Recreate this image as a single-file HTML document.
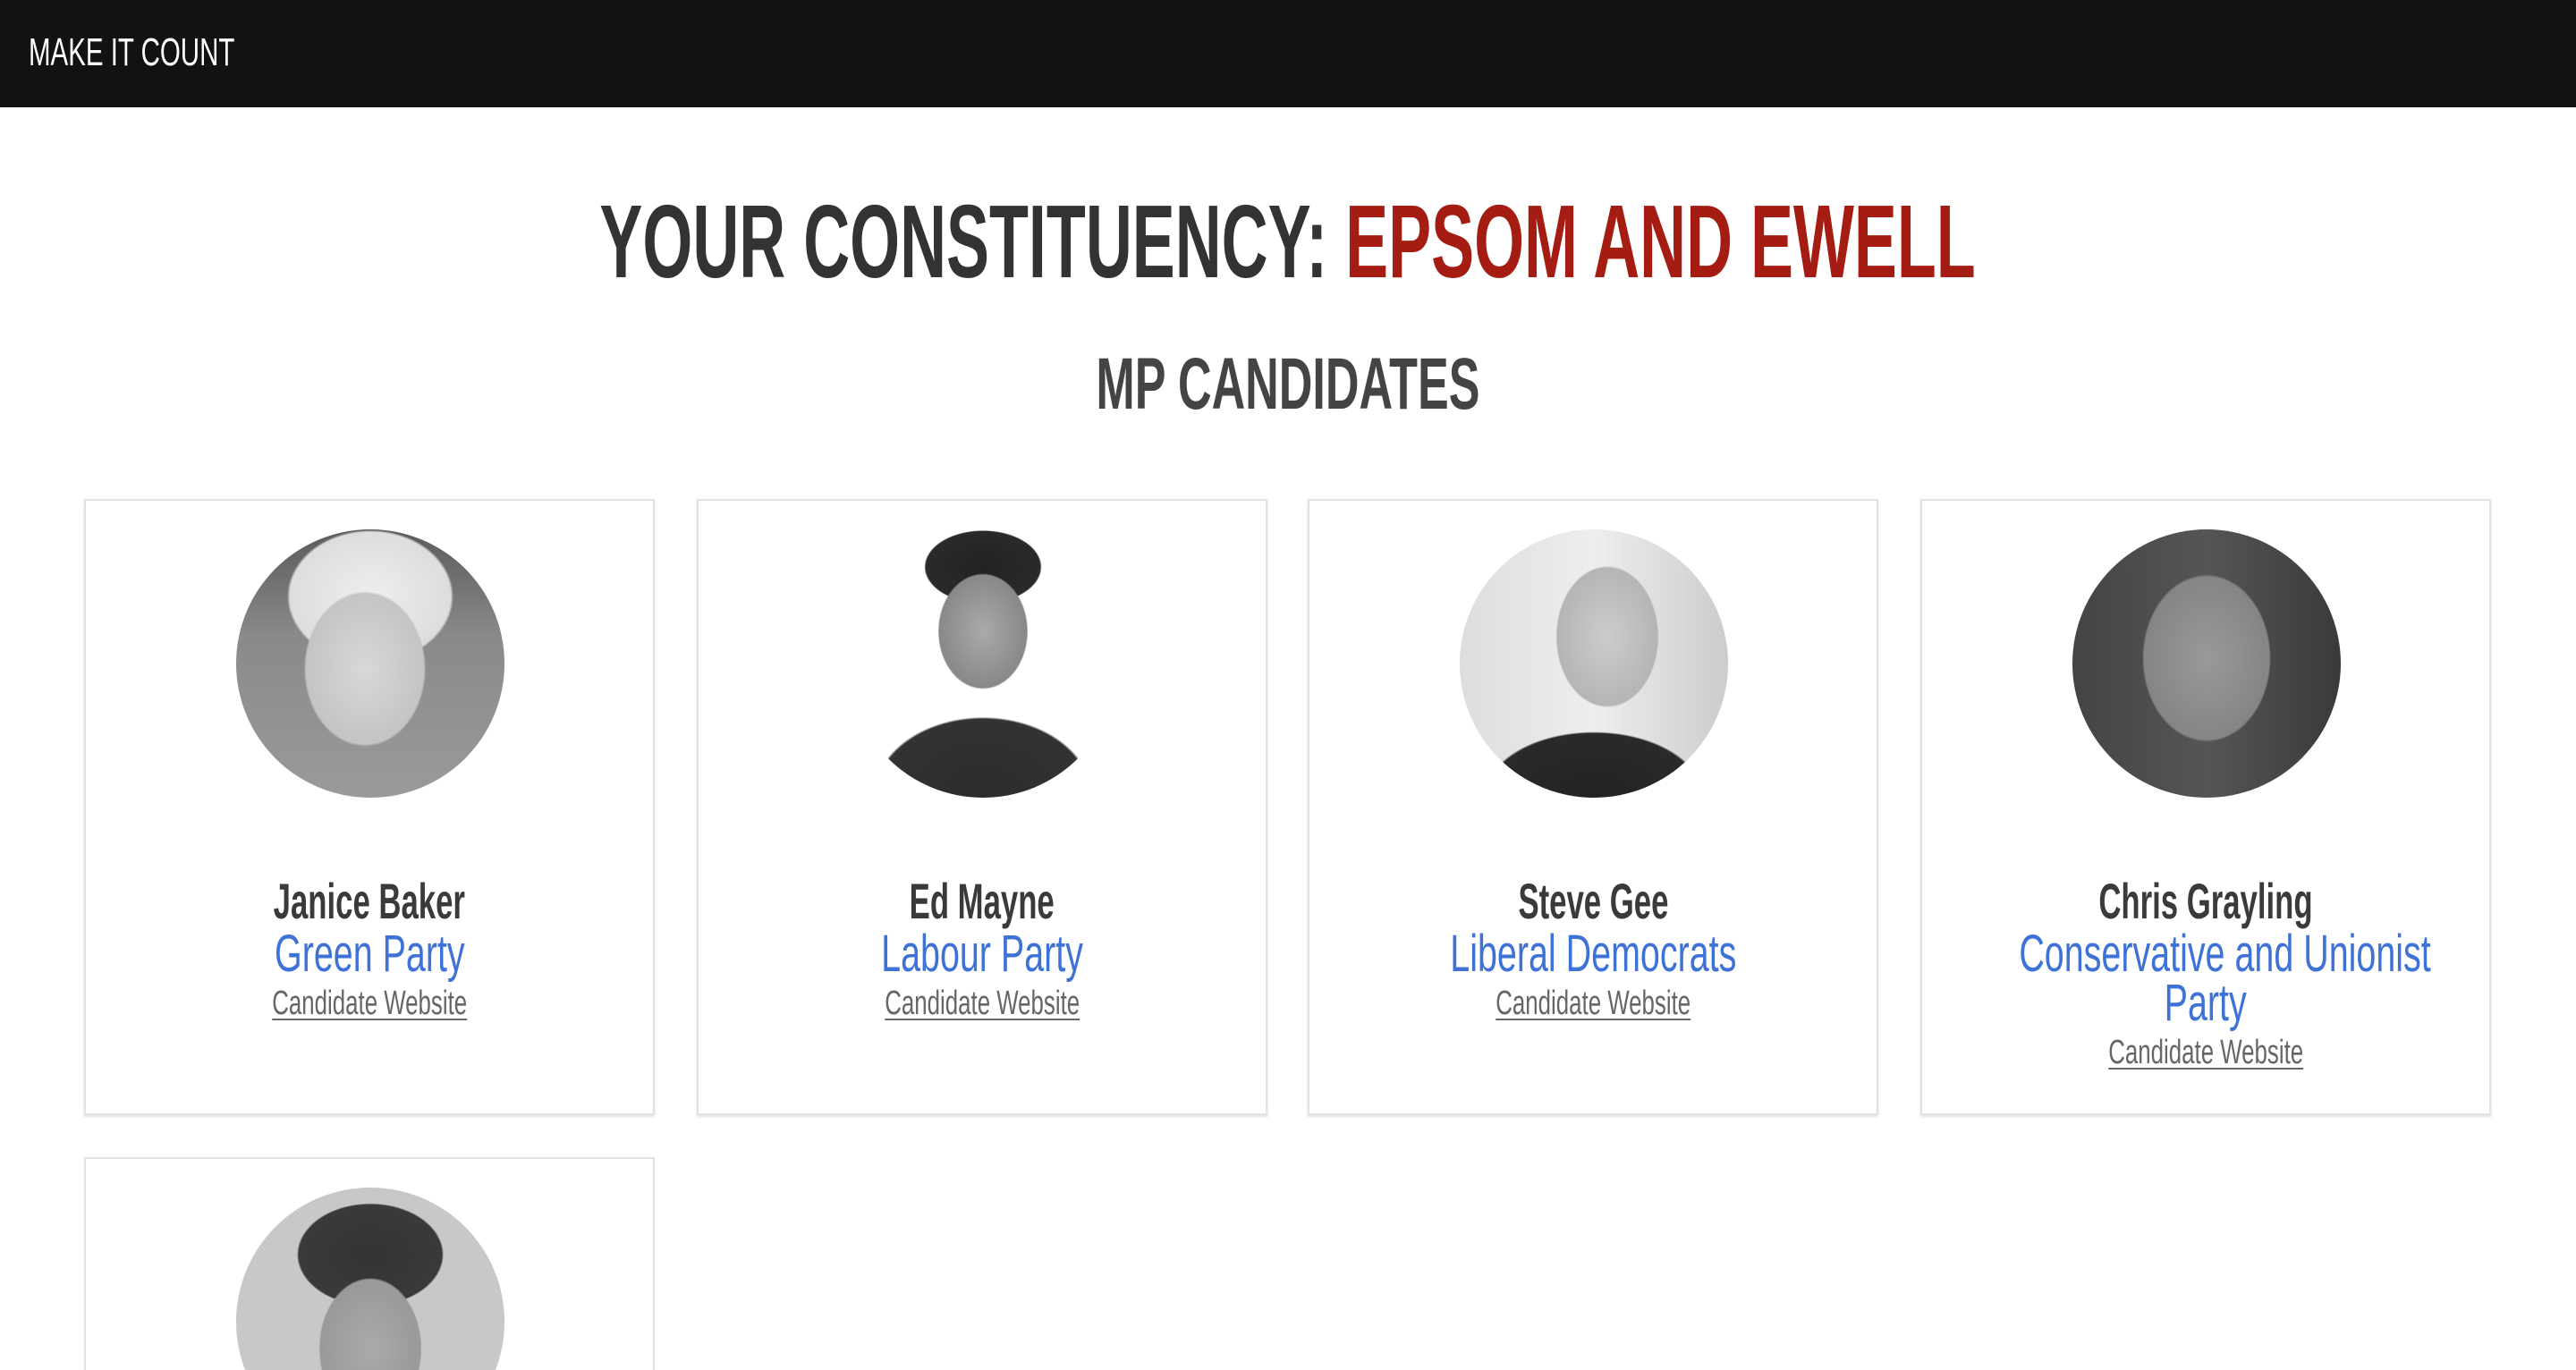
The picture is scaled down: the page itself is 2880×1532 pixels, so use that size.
<!DOCTYPE html>
<html><head><meta charset="utf-8"><style>
*{margin:0;padding:0;box-sizing:border-box}
html{width:2880px;height:1532px;overflow:hidden}
body{width:2880px;height:1532px;overflow:hidden;background:#fff;position:relative;font-family:"Liberation Sans Narrow","Liberation Sans",sans-serif}
.nav{position:absolute;left:0;top:0;width:2880px;height:120px;background:#121212}
.brand{position:absolute;left:32px;top:37px;font-size:44px;line-height:1;color:#fff;transform:scaleX(.67);transform-origin:left top;white-space:nowrap}
.t{position:absolute;left:0;width:100%;text-align:center;white-space:nowrap;line-height:1}
.t span{display:inline-block}
h1.t{top:212px;font-size:116px;font-weight:bold;color:#333}
h1.t span{transform:scaleX(.62)}
h2.t{top:389px;font-size:82px;font-weight:bold;color:#444}
h2.t span{transform:scaleX(.635)}
.card{position:absolute;width:638px;height:689px;border:2px solid #e2e2e2;box-shadow:0 2px 3px rgba(0,0,0,.12);background:#fff}
.ph{position:absolute;left:168px;top:32px;width:300px;height:300px;border-radius:50%;overflow:hidden}
.nm{top:420px;font-size:56px;font-weight:bold;color:#3a3a3a}
.nm span{transform:scaleX(.62)}
.pt{font-size:58px;color:#3f72d6}
.pt span{transform:scaleX(.68)}
.lk{font-size:38px;color:#666}
.lk span{transform:scaleX(.68);text-decoration:underline;text-decoration-thickness:2px;text-underline-offset:5px}
</style></head><body>
<div class="nav"><div class="brand">MAKE IT COUNT</div></div>
<h1 class="t"><span>YOUR CONSTITUENCY: <b style="color:#a51d12">EPSOM AND EWELL</b></span></h1>
<h2 class="t"><span>MP CANDIDATES</span></h2>

<div class="card" style="left:94px;top:558px">
 <div class="ph" style="background:radial-gradient(ellipse 110px 140px at 48% 52%,#d8d8d8 0,#c4c4c4 60%,transparent 62%),radial-gradient(ellipse 150px 120px at 50% 25%,#eee 0,#ddd 60%,transparent 62%),linear-gradient(#5a5a5a,#8a8a8a 40%,#9a9a9a)"></div>
 <div class="t nm"><span>Janice Baker</span></div>
 <div class="t pt" style="top:478px"><span>Green Party</span></div>
 <div class="t lk" style="top:543px"><span>Candidate Website</span></div>
</div>

<div class="card" style="left:779px;top:558px">
 <div class="ph" style="background:radial-gradient(ellipse 70px 90px at 50% 38%,#aaa 0,#888 70%,transparent 72%),radial-gradient(ellipse 80px 50px at 50% 14%,#222 0,#2a2a2a 80%,transparent 82%),radial-gradient(ellipse 150px 110px at 50% 100%,#2b2b2b 0,#333 80%,transparent 82%),#fff"></div>
 <div class="t nm"><span>Ed Mayne</span></div>
 <div class="t pt" style="top:478px"><span>Labour Party</span></div>
 <div class="t lk" style="top:543px"><span>Candidate Website</span></div>
</div>

<div class="card" style="left:1462px;top:558px">
 <div class="ph" style="background:radial-gradient(ellipse 80px 110px at 55% 40%,#ccc 0,#b5b5b5 70%,transparent 72%),radial-gradient(ellipse 150px 90px at 50% 100%,#222 0,#2a2a2a 80%,transparent 82%),linear-gradient(90deg,#ddd,#eee 50%,#ccc)"></div>
 <div class="t nm"><span>Steve Gee</span></div>
 <div class="t pt" style="top:478px"><span>Liberal Democrats</span></div>
 <div class="t lk" style="top:543px"><span>Candidate Website</span></div>
</div>

<div class="card" style="left:2147px;top:558px">
 <div class="ph" style="background:radial-gradient(ellipse 100px 130px at 50% 48%,#999 0,#858585 70%,transparent 72%),linear-gradient(90deg,#444,#555 50%,#3a3a3a)"></div>
 <div class="t nm"><span>Chris Grayling</span></div>
 <div class="t pt" style="top:478px"><span>Conservative and Unionist</span></div>
 <div class="t pt" style="top:533px"><span>Party</span></div>
 <div class="t lk" style="top:598px"><span>Candidate Website</span></div>
</div>

<div class="card" style="left:94px;top:1294px;height:238px;border-bottom:none;box-shadow:none;overflow:hidden">
 <div class="ph" style="background:radial-gradient(ellipse 80px 110px at 50% 60%,#aaa 0,#999 70%,transparent 72%),radial-gradient(ellipse 100px 70px at 50% 25%,#333 0,#3a3a3a 80%,transparent 82%),#c8c8c8"></div>
</div>
</body></html>
